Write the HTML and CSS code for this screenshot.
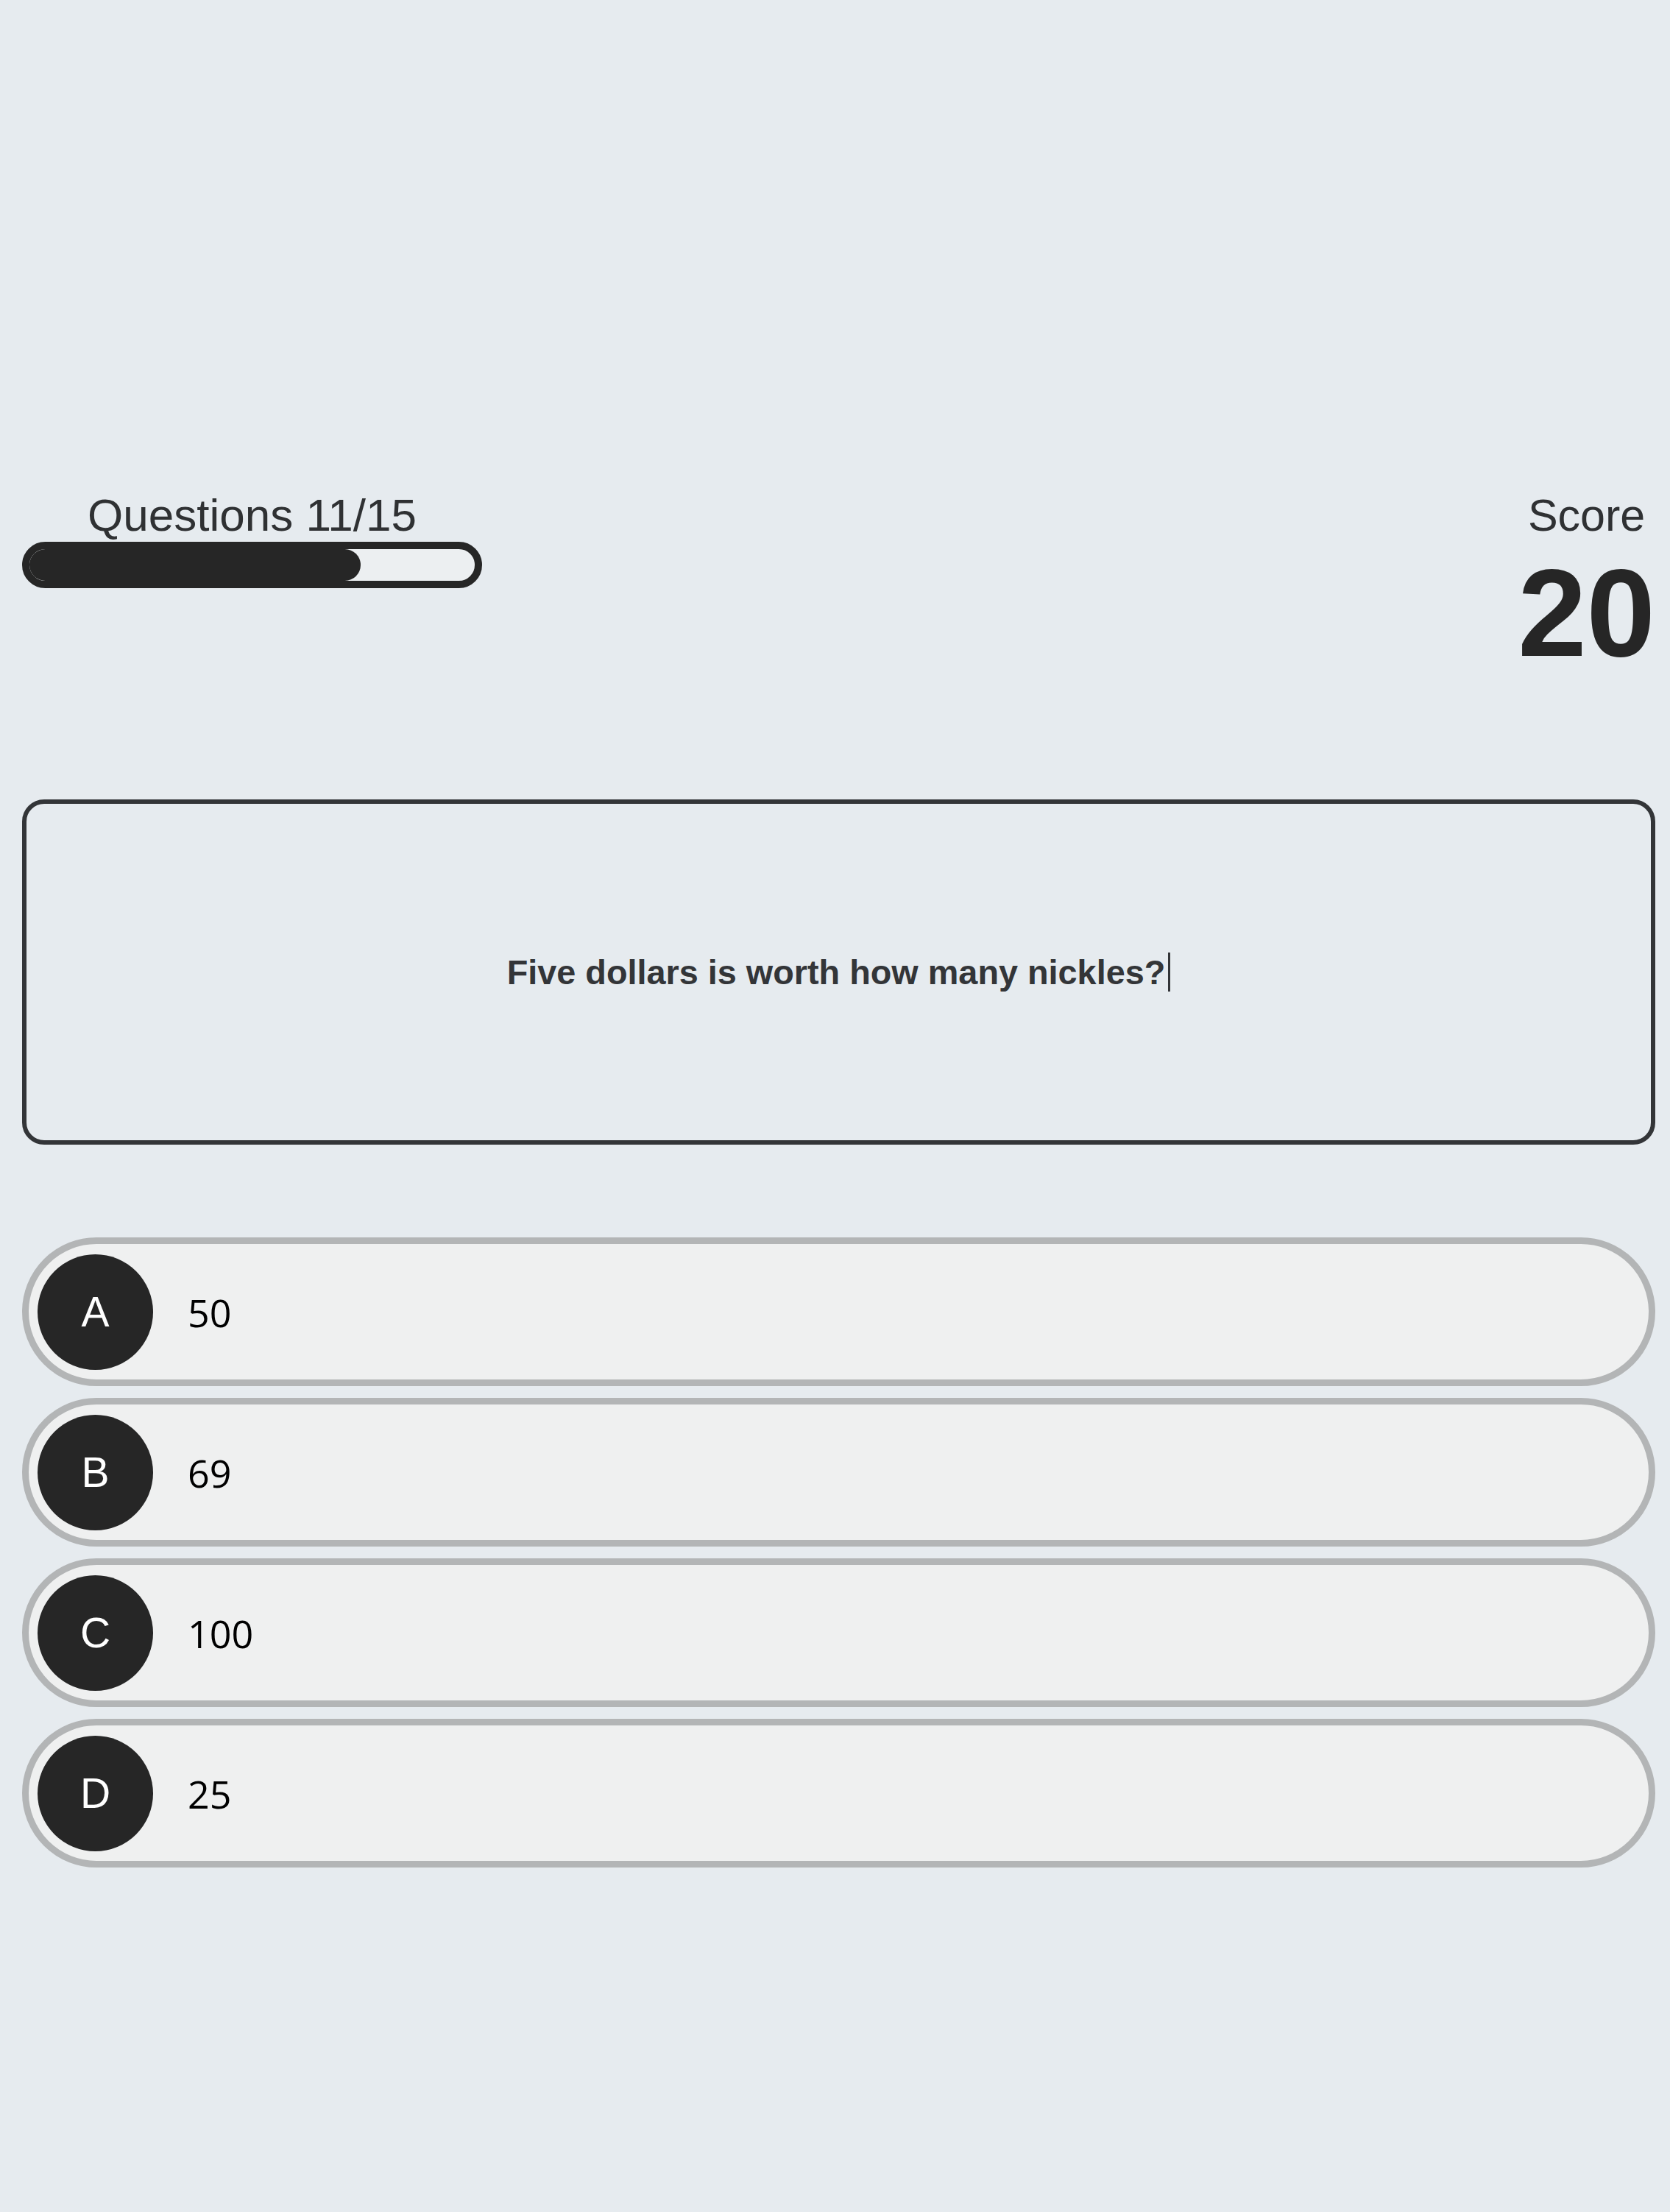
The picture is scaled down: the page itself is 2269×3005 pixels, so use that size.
FILE: index.html
```html
<!DOCTYPE html>
<html lang="en">
<head>
<meta charset="utf-8">
<title>Quiz</title>
<link rel="stylesheet" href="styles.css">
</head>
<body>
<main class="quiz">
  <header class="hud">
    <div class="progress">
      <div class="progress-label">Questions 11/15</div>
      <div class="progress-bar"><div class="progress-fill" style="width: 74.4%"></div></div>
    </div>
    <div class="score">
      <div class="score-label">Score</div>
      <div class="score-value">20</div>
    </div>
  </header>

  <section class="question">
    <p class="question-text">Five dollars is worth how many nickles?<span class="caret"></span></p>
  </section>

  <ul class="choices">
    <li class="choice"><span class="choice-letter">A</span><span class="choice-text">50</span></li>
    <li class="choice"><span class="choice-letter">B</span><span class="choice-text">69</span></li>
    <li class="choice"><span class="choice-letter">C</span><span class="choice-text">100</span></li>
    <li class="choice"><span class="choice-letter">D</span><span class="choice-text">25</span></li>
  </ul>
</main>
</body>
</html>
```

FILE: styles.css
```css
html {
  background: #e6ebef;
}

body {
  margin: 0;
  min-height: 3005px;
  background: #e6ebef;
  font-family: "Liberation Sans", Arial, sans-serif;
  color: #2f3133;
}

.quiz {
  padding: 665px 20px 0 30px;
}

.hud {
  display: flex;
  justify-content: space-between;
  align-items: flex-start;
}

.progress {
  display: flex;
  flex-direction: column;
  align-items: center;
  width: 625px;
}

.progress-label {
  font-size: 62px;
  line-height: 70px;
  margin-bottom: 1px;
}

.progress-bar {
  box-sizing: border-box;
  width: 625px;
  height: 63px;
  border: 10px solid #262626;
  border-radius: 32px;
  background: #eceff1;
  overflow: hidden;
}

.progress-fill {
  height: 100%;
  background: #262626;
  border-radius: 0 22px 22px 0;
}

.score {
  display: flex;
  flex-direction: column;
  align-items: center;
}

.score-label {
  font-size: 61px;
  line-height: 70px;
}

.score-value {
  font-size: 168px;
  font-weight: 700;
  line-height: 168px;
  margin-top: 14px;
  color: #262626;
}

.question {
  box-sizing: border-box;
  height: 469px;
  margin-top: 169px;
  border: 6px solid #333538;
  border-radius: 30px;
  display: flex;
  align-items: center;
  justify-content: center;
}

.question-text {
  margin: 0;
  font-size: 46.8px;
  font-weight: 700;
  color: #333538;
  display: flex;
  align-items: center;
}

.caret {
  display: inline-block;
  width: 3px;
  height: 53px;
  margin-left: 4px;
  background: #333538;
}

.choices {
  list-style: none;
  margin: 126px 0 0;
  padding: 0;
  display: flex;
  flex-direction: column;
  gap: 16px;
}

.choice {
  box-sizing: border-box;
  height: 202px;
  border: 9px solid #b3b5b6;
  border-radius: 101px;
  background: #eff0f0;
  display: flex;
  align-items: center;
  padding-left: 12px;
}

.choice-letter {
  flex: none;
  width: 157px;
  height: 157px;
  border-radius: 50%;
  background: #262626;
  color: #ffffff;
  font-size: 57px;
  display: flex;
  align-items: center;
  justify-content: center;
}

.choice-text {
  margin-left: 47px;
  font-family: "Open Sans", "Noto Sans", sans-serif;
  font-size: 52px;
  color: #000000;
}
```
